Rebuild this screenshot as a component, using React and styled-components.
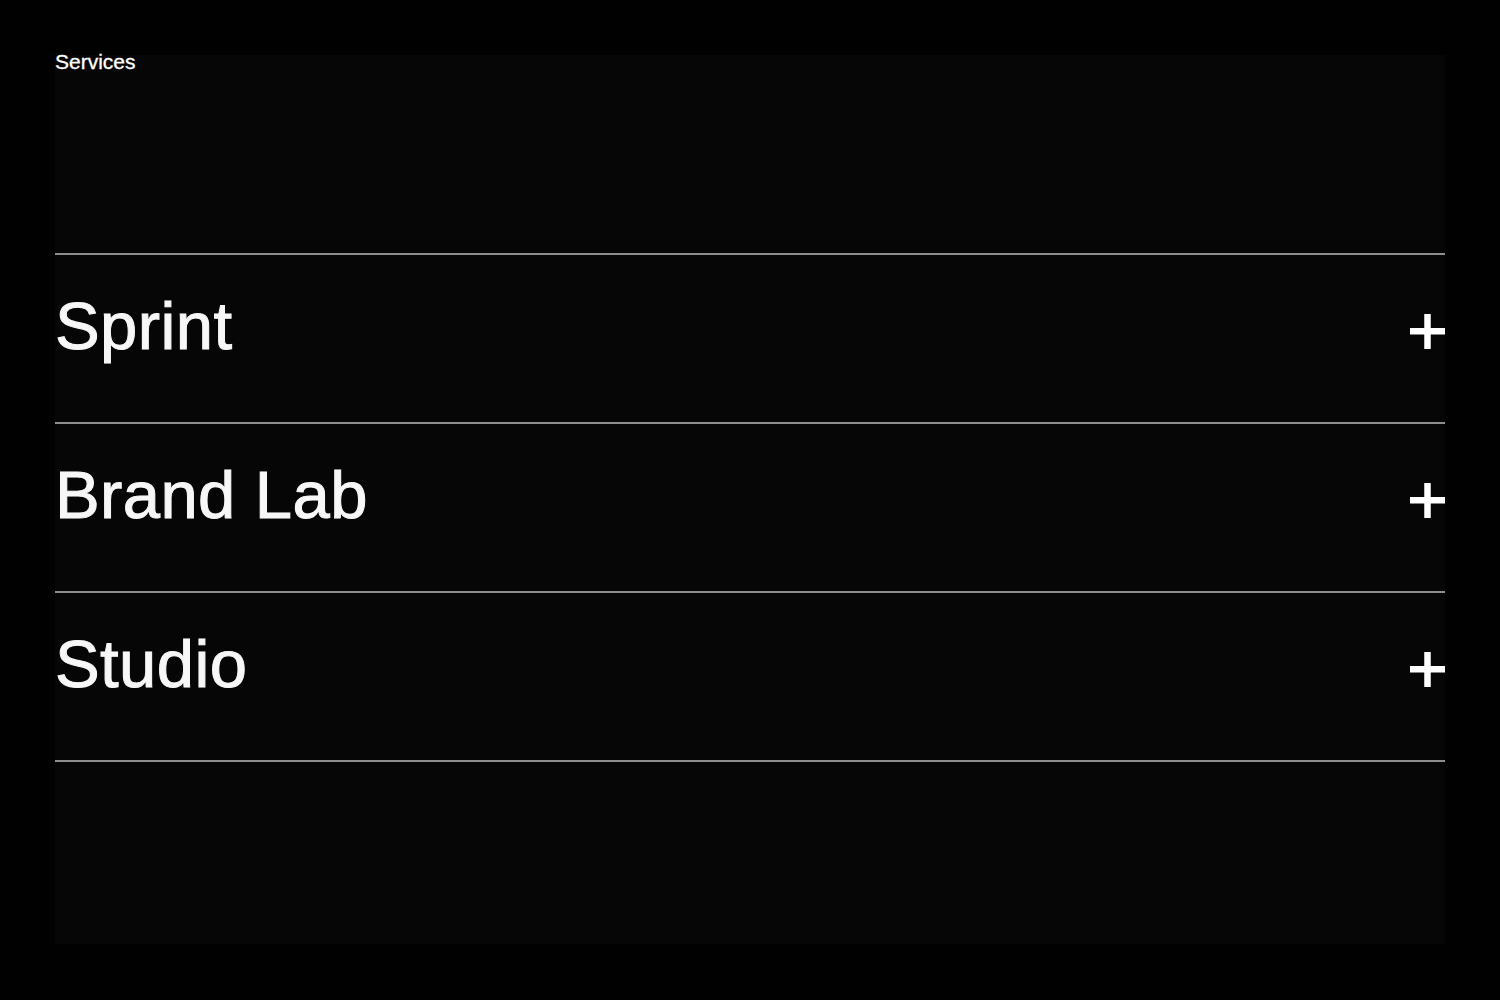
import React from "react";
import styled, { createGlobalStyle } from "styled-components";

const Global = createGlobalStyle`
  html, body { margin: 0; padding: 0; background: #010101; }
  body { font-family: "Liberation Sans", Arial, sans-serif; }
`;

const Page = styled.div`
  box-sizing: border-box;
  width: 1500px;
  height: 1000px;
  padding: 55px;
  background: #010101;
`;

const Panel = styled.section`
  height: 889px;
  background: #060606;
  display: flex;
  flex-direction: column;
`;

const Label = styled.div`
  color: #fff;
  font-size: 21px;
  line-height: 14px;
  height: 14px;
  letter-spacing: 0;
  -webkit-text-stroke: 0.3px #fff;
`;

const List = styled.div`
  margin-top: 184px;
  display: flex;
  flex-direction: column;
  border-bottom: 2px solid #8e8e8e;
`;

const Row = styled.div`
  box-sizing: border-box;
  height: 169px;
  border-top: 2px solid #8e8e8e;
  display: flex;
  align-items: flex-start;
  justify-content: space-between;
  padding-top: 37px;
`;

const Title = styled.h2`
  margin: 0;
  color: #f7f7f7;
  font-weight: 400;
  font-size: 67px;
  line-height: 67px;
  letter-spacing: 0.4px;
  -webkit-text-stroke: 1px #f7f7f7;
`;

const PlusButton = styled.button`
  margin-top: 22px;
  padding: 0;
  border: 0;
  background: transparent;
  width: 35px;
  height: 35px;
  display: flex;
  cursor: pointer;
`;

const Plus = () => (
  <svg width="35" height="35" viewBox="0 0 35 35">
    <rect x="0" y="14" width="35" height="6.5" fill="#fff" />
    <rect x="14.25" y="0" width="6.5" height="35" fill="#fff" />
  </svg>
);

const services = ["Sprint", "Brand Lab", "Studio"];

export default function App() {
  return (
    <>
      <Global />
      <Page>
        <Panel>
          <Label>Services</Label>
          <List>
            {services.map((s) => (
              <Row key={s}>
                <Title>{s}</Title>
                <PlusButton aria-label={`Expand ${s}`}>
                  <Plus />
                </PlusButton>
              </Row>
            ))}
          </List>
        </Panel>
      </Page>
    </>
  );
}
